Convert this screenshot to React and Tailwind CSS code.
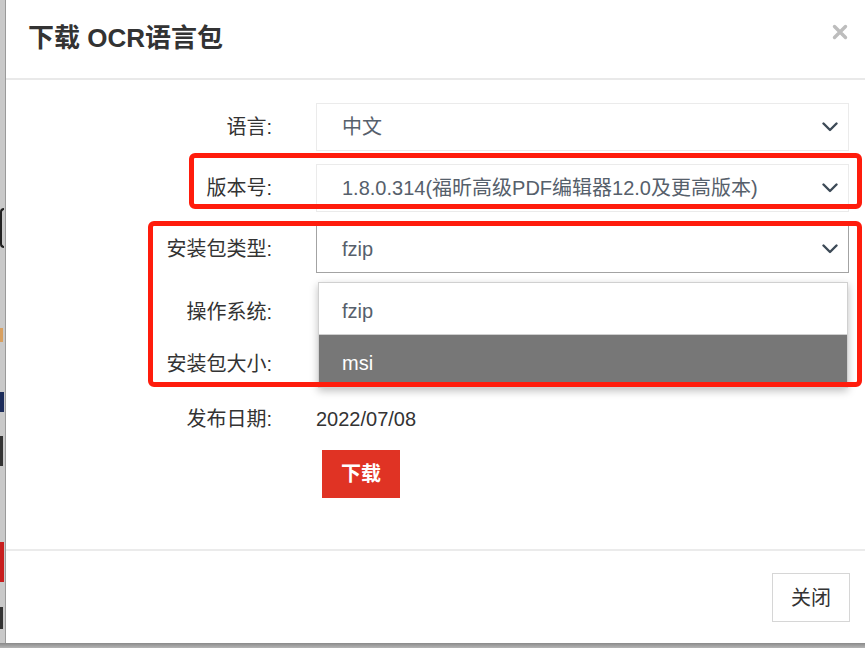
import { useState } from "react";

const font = { fontFamily: '"Liberation Sans", "Noto Sans CJK SC", sans-serif' };

function Chevron() {
  return (
    <svg width="16" height="10" viewBox="0 0 16 10" className="shrink-0">
      <polyline
        points="1.5,1.5 8,8 14.5,1.5"
        fill="none"
        stroke="#3d4a57"
        strokeWidth="2.4"
        strokeLinecap="round"
        strokeLinejoin="round"
      />
    </svg>
  );
}

function Select({ value, active, children }) {
  return (
    <div className="relative w-[533px]">
      <div
        className={
          "flex h-[48px] items-center justify-between bg-white pl-[25px] pr-[10px] text-[20px] text-[#56606b] border " +
          (active ? "border-[#a3a3a3]" : "border-[#ebebeb]")
        }
      >
        <span>{value}</span>
        <Chevron />
      </div>
      {children}
    </div>
  );
}

function Row({ label, h = "h-[48px]", children }) {
  return (
    <div className={"flex items-center " + h}>
      <div className="w-[266px] text-right text-[20px] text-[#333]">{label}</div>
      <div className="ml-[44px]">{children}</div>
    </div>
  );
}

export default function App() {
  const [type] = useState("fzip");
  const options = ["fzip", "msi"];

  return (
    <div className="relative flex h-[648px] w-[865px] flex-col overflow-hidden bg-[#c4c4c4]" style={font}>
      <div className="flex h-[643px]">
        {/* page behind the dialog */}
        <div className="flex w-[5px] flex-col bg-[#c9c9c9]">
          <div className="mt-[208px] h-[40px] w-[4px] border-2 border-r-0 border-[#222] rounded-l" />
          <div className="mt-[80px] h-[14px] w-[3px] bg-[#d8a060]" />
          <div className="mt-[50px] h-[20px] w-[4px] bg-[#1c2c5a]" />
          <div className="mt-[24px] h-[30px] w-[3px] bg-[#333]" />
          <div className="mt-[76px] h-[40px] w-[4px] bg-[#c81e1e]" />
          <div className="mt-[25px] h-[22px] w-[3px] bg-[#333]" />
        </div>

        <div className="flex flex-1 flex-col border-l border-[#9a9a9a] bg-white">
          {/* header */}
          <div className="flex h-[80px] items-center justify-between border-b-2 border-[#e9e9e9] pl-[22px] pr-[17px]">
            <h1 className="-mt-[2px] text-[26px] font-bold text-[#333]">下载 OCR语言包</h1>
            <svg width="16" height="16" viewBox="0 0 16 16" className="-mt-[14px]">
              <path d="M2.5 2.5 L13.5 13.5 M13.5 2.5 L2.5 13.5" stroke="#bdbdbd" strokeWidth="3.4" strokeLinecap="round" />
            </svg>
          </div>

          {/* body */}
          <div className="flex flex-1 flex-col pt-[23px]">
            <div className="flex flex-col gap-[13px]">
              <Row label="语言:">
                <Select value="中文" />
              </Row>
              <Row label="版本号:">
                <Select value="1.8.0.314(福昕高级PDF编辑器12.0及更高版本)" />
              </Row>
              <Row label="安装包类型:">
                <Select value={type} active>
                  <div className="absolute left-[2px] top-[57px] z-10 w-[530px] border border-[#d0d0d0] bg-white shadow-[0_3px_8px_rgba(0,0,0,0.25)]">
                    {options.map((o) => (
                      <div
                        key={o}
                        className={
                          "flex h-[52px] items-center pl-[23px] pt-[4px] text-[20px] " +
                          (o === "msi" ? "bg-[#777777] text-white" : "border-b border-[#cfcfcf] text-[#56606b]")
                        }
                      >
                        {o}
                      </div>
                    ))}
                  </div>
                </Select>
              </Row>
            </div>
            <div className="mt-[13px] flex flex-col">
              <Row label="操作系统:" h="h-[52px]">
                <span className="block w-[2px]" />
              </Row>
              <Row label="安装包大小:" h="h-[52px]">
                <span className="block w-[2px]" />
              </Row>
              <Row label="发布日期:" h="h-[58px]">
                <span className="text-[20px] text-[#333]">2022/07/08</span>
              </Row>
            </div>
            <div className="mt-[2px] pl-[316px]">
              <button className="h-[48px] w-[78px] bg-[#e03324] text-[20px] font-bold text-white">下载</button>
            </div>
          </div>

          {/* footer */}
          <div className="flex h-[94px] items-start justify-end border-t-2 border-[#ebebeb] pr-[15px] pt-[22px]">
            <button className="h-[49px] w-[78px] border border-[#d6d6d6] bg-white text-[20px] text-[#333]">关闭</button>
          </div>
        </div>
      </div>
      <div className="h-[5px] bg-gradient-to-b from-[#8a8a8a] to-[#b5b5b5]" />

      {/* red annotation boxes */}
      <div className="pointer-events-none absolute left-[189px] top-[153px] h-[56px] w-[673px] rounded-[6px] border-[5px] border-[#ff1c0c]" />
      <div className="pointer-events-none absolute left-[148px] top-[221px] z-20 h-[166px] w-[714px] rounded-[6px] border-[5px] border-[#ff1c0c]" />
    </div>
  );
}
